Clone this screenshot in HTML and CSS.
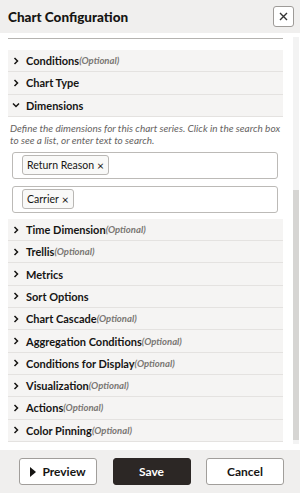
FILE: index.html
```html
<!DOCTYPE html>
<html lang="en">
<head>
    <meta charset="UTF-8">
    <meta name="viewport" content="width=device-width, initial-scale=1.0">
    <title>Chart Configuration</title>
    <link rel="stylesheet" href="styles.css">
</head>
<body>
    <div class="dialog">
        <header class="dialog-header">
            <h1>Chart Configuration</h1>
            <button class="close-button" aria-label="Close">
                <svg width="9" height="9" viewBox="0 0 9 9"><path d="M1 1L8 8M8 1L1 8" stroke="#333" stroke-width="1.4"/></svg>
            </button>
        </header>

        <div class="dialog-body">
            <div class="sections">
                <div class="top-rule"></div>
                <div class="section"><svg class="chevron" viewBox="0 0 8 8"><path d="M2.5 1L5.5 4L2.5 7"/></svg>Conditions<em>(Optional)</em></div>
                <div class="section"><svg class="chevron" viewBox="0 0 8 8"><path d="M2.5 1L5.5 4L2.5 7"/></svg>Chart Type</div>
                <div class="section"><svg class="chevron" viewBox="0 0 8 8"><path d="M1 2.5L4 5.5L7 2.5"/></svg>Dimensions</div>
                <div class="section-content">
                    <p class="help-text">Define the dimensions for this chart series. Click in the search box to see a list, or enter text to search.</p>
                    <div class="search-box"><span class="chip">Return Reason <span class="chip-x">&#215;</span></span></div>
                    <div class="search-box"><span class="chip">Carrier <span class="chip-x">&#215;</span></span></div>
                </div>
                <div class="section"><svg class="chevron" viewBox="0 0 8 8"><path d="M2.5 1L5.5 4L2.5 7"/></svg>Time Dimension<em>(Optional)</em></div>
                <div class="section"><svg class="chevron" viewBox="0 0 8 8"><path d="M2.5 1L5.5 4L2.5 7"/></svg>Trellis<em>(Optional)</em></div>
                <div class="section"><svg class="chevron" viewBox="0 0 8 8"><path d="M2.5 1L5.5 4L2.5 7"/></svg>Metrics</div>
                <div class="section"><svg class="chevron" viewBox="0 0 8 8"><path d="M2.5 1L5.5 4L2.5 7"/></svg>Sort Options</div>
                <div class="section"><svg class="chevron" viewBox="0 0 8 8"><path d="M2.5 1L5.5 4L2.5 7"/></svg>Chart Cascade<em>(Optional)</em></div>
                <div class="section"><svg class="chevron" viewBox="0 0 8 8"><path d="M2.5 1L5.5 4L2.5 7"/></svg>Aggregation Conditions<em>(Optional)</em></div>
                <div class="section"><svg class="chevron" viewBox="0 0 8 8"><path d="M2.5 1L5.5 4L2.5 7"/></svg>Conditions for Display<em>(Optional)</em></div>
                <div class="section"><svg class="chevron" viewBox="0 0 8 8"><path d="M2.5 1L5.5 4L2.5 7"/></svg>Visualization<em>(Optional)</em></div>
                <div class="section"><svg class="chevron" viewBox="0 0 8 8"><path d="M2.5 1L5.5 4L2.5 7"/></svg>Actions<em>(Optional)</em></div>
                <div class="section"><svg class="chevron" viewBox="0 0 8 8"><path d="M2.5 1L5.5 4L2.5 7"/></svg>Color Pinning<em>(Optional)</em></div>
            </div>
            <div class="scrollbar"><div class="scroll-thumb"></div></div>
        </div>

        <footer class="dialog-footer">
            <button class="btn"><span class="play"></span>Preview</button>
            <button class="btn primary">Save</button>
            <button class="btn">Cancel</button>
        </footer>
    </div>
</body>
</html>
```

FILE: styles.css
```css
body {
    margin: 0;
    font-family: Lato, "Open Sans", sans-serif;
    color: #161513;
    background-color: #ffffff;
}
.dialog {
    width: 300px;
    height: 493px;
    display: flex;
    flex-direction: column;
}
.dialog-header {
    height: 33px;
    flex: none;
    display: flex;
    align-items: center;
    justify-content: space-between;
    padding: 0 6px 0 8px;
    background-color: #f0efee;
}
.dialog-header h1 {
    margin: 0;
    font-size: 13.5px;
    font-weight: 900;
}
.close-button {
    width: 21px;
    height: 21px;
    padding: 0;
    display: flex;
    align-items: center;
    justify-content: center;
    background-color: #ffffff;
    border: 1px solid #9e9b98;
    border-radius: 3px;
}
.dialog-body {
    flex: 1;
    display: flex;
    min-height: 0;
}
.sections {
    width: 275px;
    padding-left: 8px;
}
.top-rule {
    height: 5px;
    border-bottom: 1px solid #b5b3b0;
    margin-bottom: 11px;
}
.section {
    height: 21.3px;
    display: flex;
    align-items: center;
    padding-left: 4px;
    background-color: #f5f4f3;
    border-bottom: 1px solid #e4e2e0;
    font-size: 11px;
    font-weight: 700;
}
.section em {
    font-size: 9.5px;
    font-weight: 700;
    color: #7a7774;
}
.chevron {
    width: 8px;
    height: 8px;
    margin-right: 6px;
    fill: none;
    stroke: #161513;
    stroke-width: 1.5;
}
.section-content {
    padding: 5px 0 6px 2px;
}
.help-text {
    margin: 0 0 6px;
    font-size: 10px;
    font-style: italic;
    line-height: 12px;
    color: #66635f;
}
.search-box {
    height: 25px;
    margin: 0 5px 7px 2px;
    padding-left: 9px;
    display: flex;
    align-items: center;
    border: 1px solid #bcbab7;
    border-radius: 3px;
    background-color: #ffffff;
}
.search-box:last-child {
    margin-bottom: 0;
}
.chip {
    height: 18px;
    display: flex;
    align-items: center;
    padding: 0 4px;
    border: 1px solid #b9b7b4;
    border-radius: 3px;
    background-color: #f9f9f8;
    font-size: 10.5px;
}
.chip-x {
    margin-left: 3px;
    font-size: 12px;
}
.scrollbar {
    width: 6px;
    margin: 4px 0 6px 10px;
    background-color: #f3f3f3;
}
.scroll-thumb {
    height: 250px;
    margin-top: 153px;
    background-color: #d6d5d3;
}
.dialog-footer {
    height: 43px;
    flex: none;
    display: flex;
    justify-content: space-between;
    align-items: center;
    padding: 0 16px 0 19px;
    background-color: #f0efee;
}
.btn {
    width: 78px;
    height: 27px;
    display: flex;
    align-items: center;
    justify-content: center;
    font-family: inherit;
    font-size: 12px;
    font-weight: 700;
    color: #161513;
    background-color: #ffffff;
    border: 1px solid #a19e9b;
    border-radius: 3px;
}
.btn.primary {
    background-color: #2c2725;
    border-color: #2c2725;
    color: #ffffff;
}
.play {
    width: 0;
    height: 0;
    margin-right: 6px;
    border-left: 6px solid #161513;
    border-top: 5px solid transparent;
    border-bottom: 5px solid transparent;
}
```
